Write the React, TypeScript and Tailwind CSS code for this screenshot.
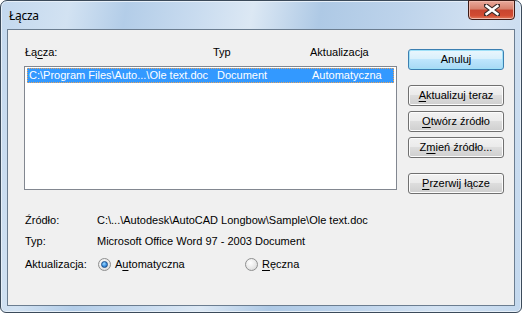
import React from "react";

function Btn({ children, main }: { children: React.ReactNode; main?: boolean }) {
  return (
    <div
      className={
        main
          ? "h-[21px] w-[96px] rounded-[3px] border border-[#3c7fb1] bg-[linear-gradient(#eaf6fd_0%,#d9f0fc_45%,#bee6fd_50%,#a7d9f5_100%)] shadow-[inset_0_0_0_1px_#9ee0f8] flex items-center justify-center"
          : "h-[21px] w-[96px] rounded-[3px] border border-[#707070] bg-[linear-gradient(#f2f2f2_0%,#ebebeb_45%,#dddddd_50%,#cfcfcf_100%)] shadow-[inset_0_0_0_1px_#fcfcfc] flex items-center justify-center"
      }
    >
      {children}
    </div>
  );
}

function Radio({ on }: { on?: boolean }) {
  return (
    <div className="w-[13px] h-[13px] rounded-full border border-[#8e8f8f] bg-[radial-gradient(circle_at_40%_35%,#ffffff_0%,#e6e6e6_60%,#cfcfcf_100%)] flex items-center justify-center">
      {on && (
        <div className="w-[7px] h-[7px] rounded-full border border-[#1b4f8a] bg-[radial-gradient(circle_at_40%_35%,#9fdcff_0%,#3a8ee0_55%,#1c5fa8_100%)]" />
      )}
    </div>
  );
}

export default function App() {
  return (
    <div className="w-[522px] h-[313px] font-['Liberation_Sans',Arial,sans-serif] text-[11px] text-black">
      <div className="w-full h-full flex flex-col rounded-t-[7px] rounded-b-[6px] border border-[#3b4a5a] bg-[linear-gradient(100deg,#c3d8ee_0%,#d2e2f2_12%,#b3cde8_22%,#c8dbef_34%,#dce8f4_44%,#aec9e5_56%,#bdd3eb_70%,#d3e2f2_85%,#c3d8ee_100%)] shadow-[inset_0_0_0_1px_#e6eff8]">
        {/* title bar */}
        <div className="h-[28px] flex items-start justify-between">
          <div className="pl-[8px] pt-[7px] text-[12px] leading-[16px] font-['Noto_Sans',sans-serif] tracking-[-0.3px]">Łącza</div>
          <div className="mr-[6px] -mt-px w-[47px] h-[20px] rounded-b-[4px] border border-[#3c1b16] bg-[linear-gradient(#e9a99b_0%,#d7806c_45%,#c7452f_50%,#d14b32_80%,#e07a5b_100%)] shadow-[inset_0_0_0_1px_#efb8aa] flex items-center justify-center">
            <svg width="16" height="12" viewBox="0 0 16 12">
              <path d="M2 1.5 L14 10.5 M14 1.5 L2 10.5" stroke="#3a2a28" strokeWidth="4.6" strokeLinecap="square" />
              <path d="M2.6 2 L13.4 10 M13.4 2 L2.6 10" stroke="#ffffff" strokeWidth="2.6" strokeLinecap="square" />
            </svg>
          </div>
        </div>
        {/* client */}
        <div className="mx-[6px] mb-[6px] flex-1 border border-[#6b7d90] bg-[#f0f0f0] flex flex-col pl-[16px]">
          <div className="flex">
            <div className="w-[373px] flex flex-col">
              <div className="mt-[15px] h-[14px] leading-[14px] relative">
                <span className="absolute left-px">
                  Łą<span className="underline underline-offset-2">c</span>za:
                </span>
                <span className="absolute left-[189px]">Typ</span>
                <span className="absolute left-[286px]">Aktualizacja</span>
              </div>
              <div className="mt-[7px] h-[124px] border border-[#828790] bg-white pt-px pl-[2px] pr-[2px]">
                <div className="h-[15px] bg-[#3399ff] border border-dotted border-[#e9a35a] text-white leading-[13px] relative">
                  <span className="absolute left-px">C:\Program Files\Auto...\Ole text.doc</span>
                  <span className="absolute left-[189px]">Document</span>
                  <span className="absolute left-[284px]">Automatyczna</span>
                </div>
              </div>
            </div>
            <div className="ml-[11px] mt-[19px] flex flex-col">
              <Btn main>Anuluj</Btn>
              <div className="mt-[15px]">
                <Btn>
                  <span className="underline underline-offset-2">A</span>ktualizuj teraz
                </Btn>
              </div>
              <div className="mt-[5px]">
                <Btn>
                  <span className="underline underline-offset-2">O</span>twórz źródło
                </Btn>
              </div>
              <div className="mt-[5px]">
                <Btn>
                  Z<span className="underline underline-offset-2">m</span>ień źródło...
                </Btn>
              </div>
              <div className="mt-[15px]">
                <Btn>
                  <span className="underline underline-offset-2">P</span>rzerwij łącze
                </Btn>
              </div>
            </div>
          </div>
          <div className="mt-[19px] flex h-[14px] leading-[14px] pl-px">
            <div className="w-[72px]">Źródło:</div>
            <div>C:\...\Autodesk\AutoCAD Longbow\Sample\Ole text.doc</div>
          </div>
          <div className="mt-[7px] flex h-[14px] leading-[14px] pl-px">
            <div className="w-[72px]">Typ:</div>
            <div>Microsoft Office Word 97 - 2003 Document</div>
          </div>
          <div className="mt-[9px] flex items-center h-[14px] leading-[14px] pl-px">
            <div className="w-[73px]">Aktualizacja:</div>
            <Radio on />
            <div className="ml-[4px] w-[130px]">
              A<span className="underline underline-offset-2">u</span>tomatyczna
            </div>
            <Radio />
            <div className="ml-[4px]">
              <span className="underline underline-offset-2">R</span>ęczna
            </div>
          </div>
        </div>
      </div>
    </div>
  );
}
